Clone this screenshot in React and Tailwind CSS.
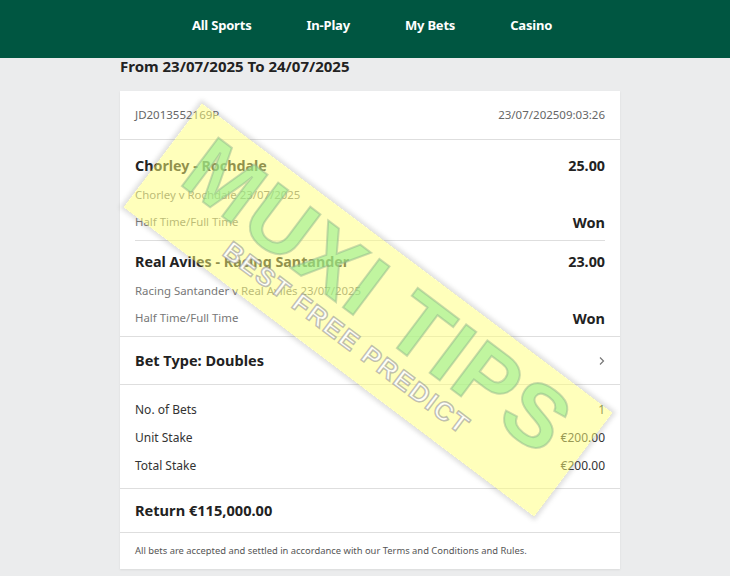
import React from 'react'

const navItems = ['All Sports', 'In-Play', 'My Bets', 'Casino']

const selections = [
  {
    title: 'Chorley - Rochdale',
    odds: '25.00',
    event: 'Chorley v Rochdale 23/07/2025',
    market: 'Half Time/Full Time',
    result: 'Won',
    wrap: 'mx-[15px] border-b border-[#dedede]',
    inner: 'pt-[16px] pb-[8px]',
  },
  {
    title: 'Real Aviles - Racing Santander',
    odds: '23.00',
    event: 'Racing Santander v Real Aviles 23/07/2025',
    market: 'Half Time/Full Time',
    result: 'Won',
    wrap: 'border-b border-[#dedede]',
    inner: 'px-[15px] pt-[11px] pb-[8px]',
  },
]

const stats = [
  ['No. of Bets', '1'],
  ['Unit Stake', '€200.00'],
  ['Total Stake', '€200.00'],
]

// overlay stamp from the source screenshot
const Watermark = () => (
  <div className="pointer-events-none absolute left-[111px] top-[245px] w-[514px] h-[130px] rotate-[37deg]">
    <div className="w-full h-full bg-[rgba(255,255,120,0.5)] shadow-[0_0_4px_3px_rgba(120,120,120,0.22)] flex flex-col items-center justify-center pb-[6px]">
      <div className="font-['Liberation_Sans',Arial,sans-serif] text-[88px] leading-[76px] font-black tracking-[2px] text-[rgba(150,238,140,0.6)] [-webkit-text-stroke:2px_rgba(140,175,140,0.45)]">
        MUXI TIPS
      </div>
      <div className="font-['Liberation_Sans',Arial,sans-serif] text-[26px] leading-[28px] font-bold tracking-[2px] text-[rgba(255,255,255,0.9)] [-webkit-text-stroke:1.5px_rgba(130,130,130,0.5)]">
        BEST FREE PREDICT
      </div>
    </div>
  </div>
)

const App = () => {
  return (
    <div className="relative min-h-[576px] bg-[#ebeced] overflow-hidden font-['Noto_Sans',sans-serif] text-[#222]">
      <header className="h-[58px] bg-[#005641] flex items-center justify-center gap-[55px] pl-[14px] pb-[7px]">
        {navItems.map((item) => (
          <span key={item} className="text-white text-[13px] font-bold tracking-[-0.2px]">{item}</span>
        ))}
      </header>

      <div className="flex justify-center pl-[10px]">
        <div className="w-[500px]">
          <h2 className="text-[15px] font-bold leading-[20px] -mt-[2px] h-[35px]">From 23/07/2025 To 24/07/2025</h2>

          <div className="bg-white shadow-[0_1px_2px_rgba(0,0,0,0.08)]">
            <div className="h-[49px] px-[15px] flex items-center justify-between text-[11.5px] text-[#666] border-b border-[#dedede]">
              <span>JD2013552169P</span>
              <span>23/07/202509:03:26</span>
            </div>

            {selections.map((s) => (
              <div key={s.title} className={s.wrap}>
                <div className={s.inner}>
                  <div className="flex justify-between text-[14.3px] font-bold leading-[20px]">
                    <span>{s.title}</span>
                    <span>{s.odds}</span>
                  </div>
                  <div className="mt-[9px] text-[11.4px] leading-[20px] text-[#777]">{s.event}</div>
                  <div className="mt-[7px] flex justify-between items-center leading-[20px]">
                    <span className="text-[11.4px] text-[#777]">{s.market}</span>
                    <span className="text-[14.5px] font-bold">{s.result}</span>
                  </div>
                </div>
              </div>
            ))}

            <div className="h-[48px] pt-[1px] px-[15px] flex items-center justify-between border-b border-[#dedede]">
              <span className="text-[14.5px] font-bold">Bet Type: Doubles</span>
              <svg className="w-[10px] h-[10px] text-[#777] -mr-[2px]" viewBox="0 0 10 10" fill="none" stroke="currentColor" strokeWidth="1.2">
                <path d="M3 1.5 L6.5 5 L3 8.5" />
              </svg>
            </div>

            <div className="px-[15px] pt-[15px] pb-[12px] flex flex-col gap-[8px] border-b border-[#dedede]">
              {stats.map(([label, value]) => (
                <div key={label} className="flex justify-between text-[12px] leading-[20px] text-[#333]">
                  <span>{label}</span>
                  <span>{value}</span>
                </div>
              ))}
            </div>

            <div className="h-[44px] pt-[1px] px-[15px] flex items-center border-b border-[#dedede]">
              <span className="text-[14.6px] font-bold">Return €115,000.00</span>
            </div>

            <div className="h-[36px] px-[15px] flex items-center text-[9.4px] text-[#555]">
              All bets are accepted and settled in accordance with our Terms and Conditions and Rules.
            </div>
          </div>
        </div>
      </div>

      <Watermark />
    </div>
  )
}

export default App
